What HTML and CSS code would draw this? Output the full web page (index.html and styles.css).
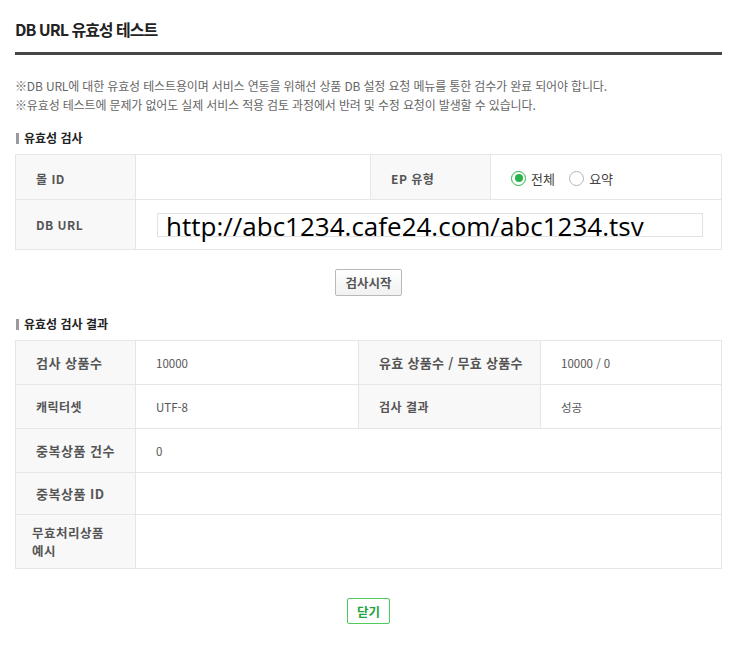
FILE: index.html
```html
<!DOCTYPE html>
<html lang="ko">
<head>
<meta charset="utf-8">
<link rel="stylesheet" href="styles.css">
</head>
<body>
<div class="page">
  <h1 class="title">DB URL 유효성 테스트</h1>
  <div class="notes">
    <p>※DB URL에 대한 유효성 테스트용이며 서비스 연동을 위해선 상품 DB 설정 요청 메뉴를 통한 검수가 완료 되어야 합니다.</p>
    <p>※유효성 테스트에 문제가 없어도 실제 서비스 적용 검토 과정에서 반려 및 수정 요청이 발생할 수 있습니다.</p>
  </div>

  <h2 class="section">유효성 검사</h2>
  <table class="grid grid-check">
    <colgroup><col class="c1"><col class="c2"><col class="c3"><col></colgroup>
    <tr class="r45">
      <th>몰 ID</th>
      <td></td>
      <th>EP 유형</th>
      <td>
        <label class="radio"><span class="dot on"></span>전체</label>
        <label class="radio"><span class="dot"></span>요약</label>
      </td>
    </tr>
    <tr class="r50">
      <th>DB URL</th>
      <td colspan="3"><div class="url">http://abc1234.cafe24.com/abc1234.tsv</div></td>
    </tr>
  </table>

  <div class="btn-row"><button class="btn">검사시작</button></div>

  <h2 class="section section-2">유효성 검사 결과</h2>
  <table class="grid grid-result">
    <colgroup><col class="c1"><col class="d2"><col class="d3"><col></colgroup>
    <tr class="r44">
      <th class="big">검사 상품수</th>
      <td>10000</td>
      <th class="big nowrap">유효 상품수 / 무효 상품수</th>
      <td>10000 / 0</td>
    </tr>
    <tr class="r44">
      <th>캐릭터셋</th>
      <td>UTF-8</td>
      <th>검사 결과</th>
      <td>성공</td>
    </tr>
    <tr class="r44">
      <th class="big">중복상품 건수</th>
      <td colspan="3">0</td>
    </tr>
    <tr class="r42">
      <th class="big">중복상품 ID</th>
      <td colspan="3"></td>
    </tr>
    <tr class="r54">
      <th class="tight">무효처리상품<br>예시</th>
      <td colspan="3"></td>
    </tr>
  </table>

  <div class="btn-row close-row"><button class="btn btn-green">닫기</button></div>
</div>
</body>
</html>
```

FILE: styles.css
```css
* { box-sizing: border-box; }
html, body { margin: 0; padding: 0; background: #fff; }
body {
  font-family: "Noto Sans CJK KR", "Noto Sans", sans-serif;
  font-size: 12px;
  color: #555;
}
.page {
  width: 707px;
  margin-left: 15px;
  padding-top: 17px;
}
.title {
  margin: 0;
  font-size: 16px;
  line-height: 24px;
  font-weight: 700;
  color: #222;
  letter-spacing: -1px;
  padding-bottom: 11px;
  border-bottom: 3px solid #464646;
}
.notes {
  padding-top: 21px;
}
.notes p {
  margin: 0;
  font-size: 12px;
  line-height: 19px;
  color: #666;
  letter-spacing: -0.15px;
}
.section {
  margin: 16px 0 0;
  font-size: 12px;
  line-height: 16px;
  font-weight: 700;
  color: #222;
  display: flex;
  align-items: center;
  height: 16px;
}
.section-2 { margin-top: 20px; }
.section::before {
  content: "";
  width: 3px;
  height: 11px;
  background: #9a9a9a;
  margin: 0 5px 0 1px;
}
.grid {
  width: 100%;
  border-collapse: collapse;
  margin-top: 8px;
  table-layout: fixed;
}
.grid th, .grid td {
  border: 1px solid #e6e6e6;
  padding: 0 20px;
  text-align: left;
  vertical-align: middle;
}
.grid th {
  background: #f8f8f8;
  color: #555;
  font-weight: 700;
  letter-spacing: 0.5px;
}
.grid th.big { font-size: 13px; }
.grid th.nowrap { white-space: nowrap; padding-right: 0; letter-spacing: 0.3px; }
.grid th.tight { padding: 0 16px; font-size: 12.5px; line-height: 18px; }
.grid td {
  color: #555;
  font-size: 11.5px;
}
.r45 th, .r45 td { padding-top: 3px; }
.c1 { width: 120px; }
.c2 { width: 235px; }
.c3 { width: 120px; }
.d2 { width: 223px; }
.d3 { width: 182px; }
.r45 { height: 45px; }
.r50 { height: 50px; }
.r44 { height: 44px; }
.r42 { height: 42px; }
.r54 { height: 54px; }
.radio {
  display: inline-flex;
  align-items: center;
  font-size: 13px;
  color: #444;
  margin-right: 11px;
}
.dot {
  width: 15px;
  height: 15px;
  border-radius: 50%;
  border: 1px solid #b5b5b5;
  margin-right: 5px;
  background: #fff;
  position: relative;
}
.dot.on { border-color: #2ab24b; }
.dot.on::after {
  content: "";
  position: absolute;
  left: 2.5px; top: 2.5px;
  width: 8px; height: 8px;
  border-radius: 50%;
  background: #2ab24b;
}
.url {
  margin-left: 1px;
  width: 546px;
  height: 24px;
  border: 1px solid #e2e2e2;
  font-family: "Open Sans", "DejaVu Sans", sans-serif;
  font-size: 26px;
  line-height: 24px;
  color: #000;
  padding-left: 8px;
  white-space: nowrap;
}
.btn-row {
  display: flex;
  justify-content: center;
  padding-top: 19px;
}
.btn {
  font-family: "Noto Sans CJK KR", sans-serif;
  font-size: 12.5px;
  font-weight: 700;
  color: #555;
  background: linear-gradient(#fff, #f1f1f1);
  border: 1px solid #b9b9b9;
  border-radius: 2px;
  height: 27px;
  padding: 0 9px;
  cursor: pointer;
}
.close-row { padding-top: 29px; }
.btn-green {
  color: #1fa33e;
  border-color: #4fcb5e;
  background: #fff;
  height: 26px;
  padding: 0 9px;
}
```
